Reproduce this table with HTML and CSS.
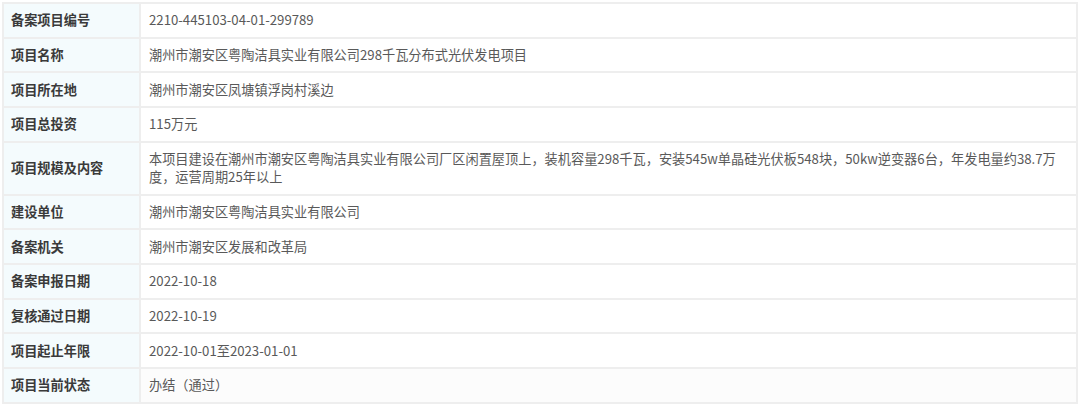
FILE: index.html
```html
<!DOCTYPE html>
<html lang="zh">
<head>
<meta charset="utf-8">
<link rel="stylesheet" href="styles.css">
</head>
<body>
<div class="wrap">
<table class="info">
<tbody>
<tr><th>备案项目编号</th><td>2210-445103-04-01-299789</td></tr>
<tr><th>项目名称</th><td>潮州市潮安区粤陶洁具实业有限公司298千瓦分布式光伏发电项目</td></tr>
<tr><th>项目所在地</th><td>潮州市潮安区凤塘镇浮岗村溪边</td></tr>
<tr><th>项目总投资</th><td>115万元</td></tr>
<tr><th>项目规模及内容</th><td>本项目建设在潮州市潮安区粤陶洁具实业有限公司厂区闲置屋顶上，装机容量298千瓦，安装545w单晶硅光伏板548块，50kw逆变器6台，年发电量约38.7万度，运营周期25年以上</td></tr>
<tr><th>建设单位</th><td>潮州市潮安区粤陶洁具实业有限公司</td></tr>
<tr><th>备案机关</th><td>潮州市潮安区发展和改革局</td></tr>
<tr><th>备案申报日期</th><td>2022-10-18</td></tr>
<tr><th>复核通过日期</th><td>2022-10-19</td></tr>
<tr><th>项目起止年限</th><td>2022-10-01至2023-01-01</td></tr>
<tr class="last"><th>项目当前状态</th><td>办结（通过）</td></tr>
</tbody>
</table>
</div>
</body>
</html>
```

FILE: styles.css
```css
html, body {
  margin: 0;
  padding: 0;
  background: #ffffff;
}
.wrap {
  padding: 2px 2px 0 2px;
  width: 1076px;
  box-sizing: border-box;
}
.info {
  width: 1076px;
  border-collapse: collapse;
  font-family: "Noto Sans CJK SC", "Microsoft YaHei", sans-serif;
  font-size: 13.2px;
  line-height: 18.3px;
  table-layout: fixed;
}
.info th,
.info td {
  border: 2px solid #eeeeee;
  padding: 7.2px 8px;
  text-align: left;
  vertical-align: middle;
}
.info th {
  width: 120px;
  background: #f4fbfd;
  color: #3a3a3a;
  font-weight: bold;
  padding-left: 7px;
}
.info td {
  color: #595959;
  font-weight: normal;
}
.info .last td {
  background: #fcfcfc;
}
```
